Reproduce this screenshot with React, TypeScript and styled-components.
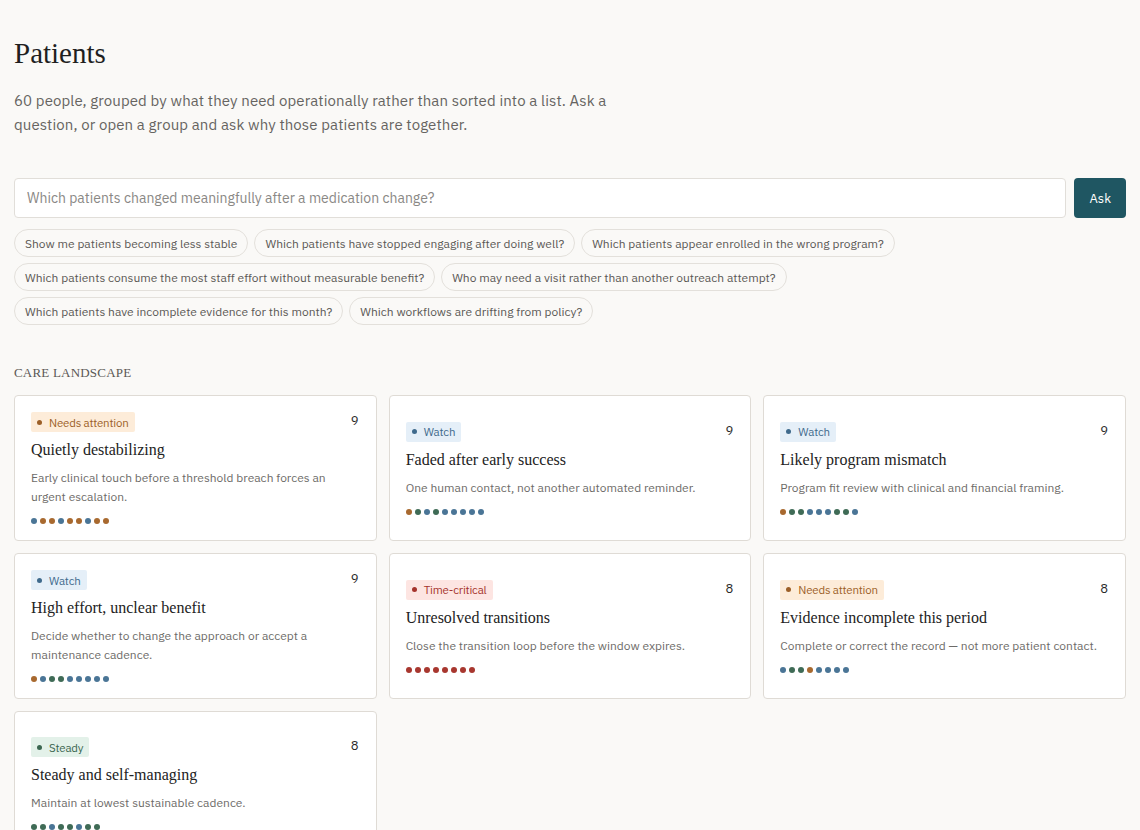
import styled, { createGlobalStyle } from 'styled-components'

const GlobalStyle = createGlobalStyle`
  * { box-sizing: border-box; }
  body {
    margin: 0;
    background: #faf9f7;
    font-family: "IBM Plex Sans", Roboto, "Noto Sans", sans-serif;
    color: #2a2a2a;
  }
`

type Tone = 'attention' | 'watch' | 'critical' | 'steady'
type DotColor = 'o' | 'b' | 'g' | 'r'

const toneStyles: Record<Tone, { bg: string; fg: string }> = {
  attention: { bg: '#fdecd9', fg: '#9c5f27' },
  watch: { bg: '#e5eff8', fg: '#3f6a8c' },
  critical: { bg: '#fde5e2', fg: '#a5332c' },
  steady: { bg: '#e3f1e9', fg: '#3b6650' },
}

const dotColors: Record<DotColor, string> = {
  o: '#a8692f',
  b: '#4a7596',
  g: '#3f6b56',
  r: '#a8372f',
}

const Page = styled.main`
  padding: 32px 14px 40px;
`

const Title = styled.h1`
  margin: 0;
  font-family: "Liberation Serif", "DejaVu Serif", serif;
  font-weight: 400;
  font-size: 29px;
  line-height: 42px;
  color: #1f1f1f;
`

const Lead = styled.p`
  margin: 15px 0 0;
  max-width: 620px;
  font-size: 15px;
  letter-spacing: 0.1px;
  line-height: 24px;
  color: #666461;
`

const AskRow = styled.form`
  display: flex;
  gap: 8px;
  margin-top: 41px;
`

const AskInput = styled.input`
  flex: 1;
  height: 40px;
  padding: 0 12px;
  border: 1px solid #e1ded9;
  border-radius: 4px;
  background: #fff;
  font: inherit;
  font-size: 14px;
  color: #333;
  outline: none;
  &::placeholder { color: #8a8885; }
`

const AskButton = styled.button`
  height: 40px;
  padding: 0 15px;
  border: none;
  border-radius: 4px;
  background: #1f5662;
  color: #fff;
  font: inherit;
  font-size: 13px;
`

const Chips = styled.div`
  display: flex;
  flex-wrap: wrap;
  gap: 6px;
  margin-top: 11px;
  max-width: 900px;
`

const Chip = styled.button`
  height: 28px;
  padding: 0 10px;
  border: 1px solid #e3e0db;
  border-radius: 14px;
  background: #faf9f7;
  font: inherit;
  font-size: 12px;
  color: #5a5855;
`

const SectionLabel = styled.h2`
  margin: 40px 0 14px;
  font-family: "Liberation Serif", "DejaVu Serif", serif;
  font-weight: 400;
  font-size: 13px;
  letter-spacing: 0.2px;
  color: #5a5855;
`

const Grid = styled.section`
  display: grid;
  grid-template-columns: repeat(3, 1fr);
  gap: 12px;
`

const Card = styled.article`
  display: flex;
  flex-direction: column;
  justify-content: center;
  min-height: 145px;
  padding: 16px;
  background: #fff;
  border: 1px solid #dfdbd5;
  border-radius: 4px;
`

const CardTop = styled.div`
  display: flex;
  justify-content: space-between;
  align-items: flex-start;
`

const Badge = styled.span<{ $tone: Tone }>`
  display: inline-flex;
  align-items: center;
  gap: 7px;
  height: 20px;
  padding: 0 6px;
  border-radius: 2px;
  background: ${p => toneStyles[p.$tone].bg};
  color: ${p => toneStyles[p.$tone].fg};
  font-size: 11.5px;
  letter-spacing: -0.2px;
  &::before {
    content: '';
    width: 5px;
    height: 5px;
    border-radius: 50%;
    background: currentColor;
  }
`

const Count = styled.span`
  font-size: 13px;
  line-height: 18px;
  color: #2a2a2a;
  margin-right: 1px;
`

const CardTitle = styled.h3`
  margin: 6px 0 0;
  font-family: "Liberation Serif", "DejaVu Serif", serif;
  font-weight: 400;
  font-size: 16px;
  line-height: 24px;
  color: #222;
`

const CardText = styled.p`
  margin: 6px 0 0;
  font-size: 12px;
  line-height: 19px;
  color: #6d6b68;
`

const Dots = styled.div`
  display: flex;
  gap: 3px;
  margin-top: 12px;
`

const Dot = styled.span<{ $c: DotColor }>`
  width: 6px;
  height: 6px;
  border-radius: 50%;
  background: ${p => dotColors[p.$c]};
`

const questions = [
  'Show me patients becoming less stable',
  'Which patients have stopped engaging after doing well?',
  'Which patients appear enrolled in the wrong program?',
  'Which patients consume the most staff effort without measurable benefit?',
  'Who may need a visit rather than another outreach attempt?',
  'Which patients have incomplete evidence for this month?',
  'Which workflows are drifting from policy?',
]

const groups: { tone: Tone; label: string; count: number; title: string; text: string; dots: string }[] = [
  { tone: 'attention', label: 'Needs attention', count: 9, title: 'Quietly destabilizing', text: 'Early clinical touch before a threshold breach forces an urgent escalation.', dots: 'boobooboo' },
  { tone: 'watch', label: 'Watch', count: 9, title: 'Faded after early success', text: 'One human contact, not another automated reminder.', dots: 'ogbgbbbbb' },
  { tone: 'watch', label: 'Watch', count: 9, title: 'Likely program mismatch', text: 'Program fit review with clinical and financial framing.', dots: 'oggbbbggb' },
  { tone: 'watch', label: 'Watch', count: 9, title: 'High effort, unclear benefit', text: 'Decide whether to change the approach or accept a maintenance cadence.', dots: 'obggbbbbb' },
  { tone: 'critical', label: 'Time-critical', count: 8, title: 'Unresolved transitions', text: 'Close the transition loop before the window expires.', dots: 'rrrrrrrr' },
  { tone: 'attention', label: 'Needs attention', count: 8, title: 'Evidence incomplete this period', text: 'Complete or correct the record — not more patient contact.', dots: 'bggobbbb' },
  { tone: 'steady', label: 'Steady', count: 8, title: 'Steady and self-managing', text: 'Maintain at lowest sustainable cadence.', dots: 'ggbggbgg' },
]

export default function App() {
  return (
    <>
      <GlobalStyle />
      <Page>
        <Title>Patients</Title>
        <Lead>
          60 people, grouped by what they need operationally rather than sorted into a list. Ask a
          question, or open a group and ask why those patients are together.
        </Lead>
        <AskRow onSubmit={e => e.preventDefault()}>
          <AskInput placeholder="Which patients changed meaningfully after a medication change?" />
          <AskButton type="submit">Ask</AskButton>
        </AskRow>
        <Chips>
          {questions.map(q => (
            <Chip key={q} type="button">{q}</Chip>
          ))}
        </Chips>
        <SectionLabel>CARE LANDSCAPE</SectionLabel>
        <Grid>
          {groups.map(g => (
            <Card key={g.title}>
              <CardTop>
                <Badge $tone={g.tone}>{g.label}</Badge>
                <Count>{g.count}</Count>
              </CardTop>
              <CardTitle>{g.title}</CardTitle>
              <CardText>{g.text}</CardText>
              <Dots>
                {g.dots.split('').map((c, i) => (
                  <Dot key={i} $c={c as DotColor} />
                ))}
              </Dots>
            </Card>
          ))}
        </Grid>
      </Page>
    </>
  )
}
